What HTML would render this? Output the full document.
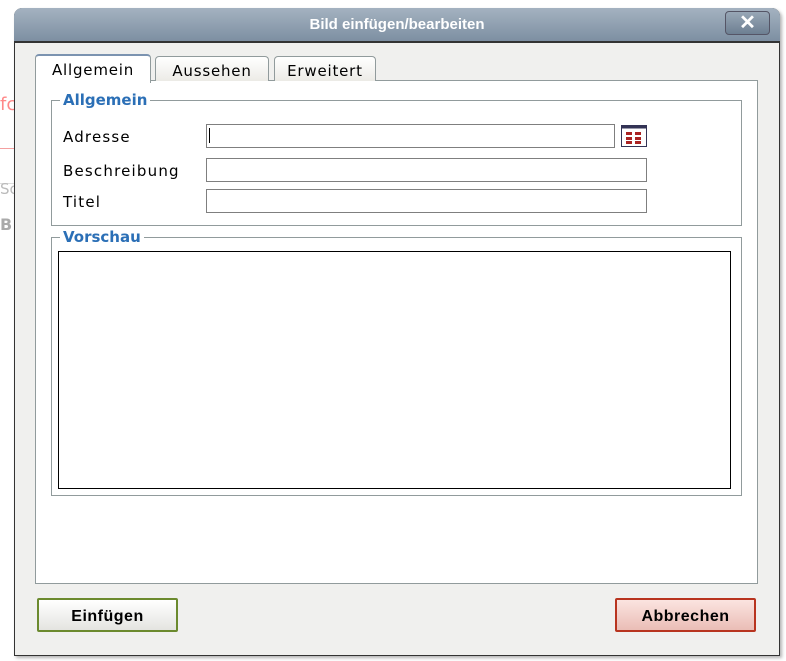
<!DOCTYPE html>
<html><head><style>
body{margin:0;width:786px;height:661px;background:#fff;position:relative;overflow:hidden;font-family:"DejaVu Sans","Liberation Sans",sans-serif;}
.abs{position:absolute;}
.dlg{left:14px;top:8px;width:764px;height:646px;background:#f0f0ee;border:1px solid #333;border-radius:8px 8px 0 0;box-shadow:2px 2px 3px rgba(0,0,0,.3);}
.title{left:14px;top:8px;width:766px;height:33px;border-radius:8px 8px 0 0;background:linear-gradient(#a4b2c0,#7d8fa2);border-bottom:2px solid #333;color:#fff;font:bold 15px "Liberation Sans",sans-serif;text-align:center;line-height:34px;}
.x{left:725px;top:11px;width:43px;height:22px;border:1px solid #556;border-radius:4px;background:linear-gradient(#98a7b6,#6d7f92);color:#fff;font:bold 20px "Liberation Sans",sans-serif;text-align:center;line-height:22px;}
.panel{left:35px;top:80px;width:721px;height:502px;background:#fff;border:1px solid #919b9c;}
.tab{top:56px;height:24px;border:1px solid #919b9c;border-bottom:none;border-radius:4px 4px 0 0;background:linear-gradient(#fff,#ecebe6);font-size:15px;letter-spacing:0.8px;line-height:28px;text-align:center;color:#000;}
.fs{border:1px solid #919b9c;}
.lg{background:#fff;color:#2b6fb6;font-weight:bold;font-size:15px;padding:0 3px;}
.lbl{font-size:15px;letter-spacing:1.2px;color:#000;}
.inp{border:1px solid #7f7f7f;background:#fff;height:22px;}
.btn{top:598px;height:30px;border:2px solid;border-radius:2px;font:bold 16px "Liberation Sans",sans-serif;letter-spacing:0.5px;text-align:center;line-height:33px;}
</style></head><body>
<div class="abs" style="left:0;top:183px;width:14px;height:1px;background:#ddd"></div>
<div class="abs" style="left:0;top:94px;width:14px;height:28px;color:#f88;font-size:18px">fc</div>
<div class="abs" style="left:0;top:148px;width:14px;height:1px;background:#f4a0a0"></div>
<div class="abs" style="left:0;top:180px;color:#bbb;font-size:15px">Sc</div>
<div class="abs" style="left:0;top:215px;color:#aaa;font-size:16px;font-weight:bold">B</div>
<div class="abs dlg"></div>
<div class="abs title">Bild einfügen/bearbeiten</div>
<div class="abs x">✕</div>
<div class="abs panel"></div>
<div class="abs tab" style="left:35px;width:114px;top:54px;height:27px;background:#fff;border-top:2px solid #7b93b0">Allgemein</div>
<div class="abs tab" style="left:155px;width:112px">Aussehen</div>
<div class="abs tab" style="left:274px;width:100px">Erweitert</div>
<div class="abs fs" style="left:51px;top:100px;width:689px;height:124px"></div>
<div class="abs lg" style="left:60px;top:91px">Allgemein</div>
<div class="abs lbl" style="left:63px;top:128px">Adresse</div>
<div class="abs lbl" style="left:63px;top:162px">Beschreibung</div>
<div class="abs lbl" style="left:63px;top:193px">Titel</div>
<div class="abs inp" style="left:206px;top:124px;width:407px"></div>
<div class="abs" style="left:209px;top:128px;width:1px;height:15px;background:#000"></div>
<div class="abs inp" style="left:206px;top:158px;width:439px"></div>
<div class="abs inp" style="left:206px;top:189px;width:439px"></div>
<svg class="abs" style="left:621px;top:125px" width="26" height="22" viewBox="0 0 26 22"><rect x="0.5" y="0.5" width="25" height="21" fill="#fff" stroke="#335"/><rect x="0.5" y="0.5" width="25" height="3" fill="#335"/><g fill="#a22"><rect x="5" y="7" width="6" height="3"/><rect x="14" y="7" width="6" height="3"/><rect x="5" y="12" width="6" height="3"/><rect x="14" y="12" width="6" height="3"/><rect x="5" y="16" width="6" height="3"/><rect x="14" y="16" width="6" height="3"/></g></svg>
<div class="abs fs" style="left:51px;top:237px;width:689px;height:257px"></div>
<div class="abs lg" style="left:60px;top:228px">Vorschau</div>
<div class="abs" style="left:58px;top:251px;width:671px;height:236px;border:1px solid #000;background:#fff"></div>
<div class="abs btn" style="left:37px;width:137px;border-color:#6b8a2e;background:linear-gradient(#fff,#e4e4e0)">Einfügen</div>
<div class="abs btn" style="left:615px;width:137px;border-color:#b8341f;background:linear-gradient(#fbe4e0,#eabdb6)">Abbrechen</div>
</body></html>
